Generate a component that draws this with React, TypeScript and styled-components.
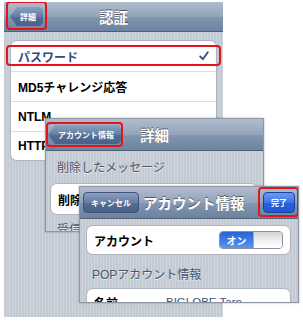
import React from "react";
import styled, { createGlobalStyle, css } from "styled-components";

const Global = createGlobalStyle`
  html, body { margin: 0; padding: 0; background: #fff; }
  #root { width: 303px; height: 322px; }
`;

const FONT = `"Liberation Sans", "Noto Sans CJK JP", sans-serif`;

const Stage = styled.div`
  position: relative;
  width: 303px;
  height: 322px;
  overflow: hidden;
  background: #fff;
  font-family: ${FONT};
`;

const Screen = styled.div<{ $x: number; $y: number; $w: number; $h: number; $framed?: boolean }>`
  position: absolute;
  left: ${(p) => p.$x}px;
  top: ${(p) => p.$y}px;
  width: ${(p) => p.$w}px;
  height: ${(p) => p.$h}px;
  box-sizing: border-box;
  display: flex;
  flex-direction: column;
  overflow: hidden;
  background: repeating-linear-gradient(90deg, #c3cad3 0 2px, #cfd5dc 2px 3px);
  ${(p) =>
    p.$framed &&
    css`
      border: 1px solid #8f97a2;
      box-shadow: 0 0 2px rgba(0, 0, 0, 0.3);
    `}
`;

const NavBar = styled.div<{ $h: number; $pad: number }>`
  flex: none;
  height: ${(p) => p.$h}px;
  box-sizing: border-box;
  padding: 0 ${(p) => p.$pad}px;
  display: grid;
  grid-template-columns: 1fr auto 1fr;
  align-items: center;
  background: linear-gradient(#b1bdcd, #92a3ba 50%, #8397b0 51%, #6c82a0);
  border-bottom: 1px solid #4f5f75;
`;

const Slot = styled.div<{ $end?: boolean }>`
  display: flex;
  justify-content: ${(p) => (p.$end ? "flex-end" : "flex-start")};
`;

const Title = styled.div<{ $shift?: number }>`
  color: #fff;
  font-weight: bold;
  font-size: 14.5px;
  white-space: nowrap;
  margin-left: ${(p) => p.$shift ?? 0}px;
  text-shadow: 0 -1px 0 rgba(0, 0, 0, 0.5);
`;

const Marked = styled.div`
  position: relative;
  display: flex;
`;

const Highlight = styled.div<{ $t: number; $r: number; $b: number; $l: number }>`
  position: absolute;
  top: ${(p) => p.$t}px;
  right: ${(p) => p.$r}px;
  bottom: ${(p) => p.$b}px;
  left: ${(p) => p.$l}px;
  border: 2.5px solid #e3141c;
  border-radius: 4px;
  pointer-events: none;
`;

const BackButton = styled.div`
  height: 19px;
  padding: 0 7px 0 10px;
  display: flex;
  align-items: center;
  color: #fff;
  font-size: 8px;
  font-weight: bold;
  white-space: nowrap;
  background: linear-gradient(#8ba1c0, #637ca2 50%, #546d93 51%, #4a628b);
  clip-path: polygon(7px 0, calc(100% - 3px) 0, 100% 3px, 100% calc(100% - 3px), calc(100% - 3px) 100%, 7px 100%, 0 50%);
`;

const BarButton = styled.div<{ $done?: boolean }>`
  height: 19px;
  padding: 0 7px;
  display: flex;
  align-items: center;
  color: #fff;
  font-size: 8px;
  font-weight: bold;
  white-space: nowrap;
  border-radius: 4px;
  border: 1px solid ${(p) => (p.$done ? "#1c3f9a" : "#3d5278")};
  background: ${(p) =>
    p.$done
      ? "linear-gradient(#6b9af0, #3a74e6 50%, #2861de 51%, #2158d2)"
      : "linear-gradient(#8ba1c0, #637ca2 50%, #546d93 51%, #4a628b)"};
`;

const Group = styled.div<{ $m: string }>`
  margin: ${(p) => p.$m};
  background: #fff;
  border: 1px solid #adb4bd;
  border-radius: 7px;
  display: flex;
  flex-direction: column;
`;

const Row = styled.div<{ $h: number; $sel?: boolean; $first?: boolean; $lift?: number }>`
  position: relative;
  height: ${(p) => p.$h}px;
  box-sizing: border-box;
  padding: 0 7px ${(p) => p.$lift ?? 0}px 7px;
  display: flex;
  align-items: center;
  justify-content: space-between;
  font-size: 12px;
  font-weight: bold;
  white-space: nowrap;
  color: ${(p) => (p.$sel ? "#314d7f" : "#000")};
  border-top: ${(p) => (p.$first ? "none" : "1px solid #dcdcdc")};
`;

const Label = styled.span<{ $w?: number }>`
  width: ${(p) => (p.$w ? `${p.$w}px` : "auto")};
  flex: none;
`;

const Value = styled.span`
  flex: 1;
  font-weight: normal;
  font-size: 11.5px;
  color: #385487;
`;

const SectionHeader = styled.div<{ $pt: number; $pb: number; $pl: number }>`
  padding: ${(p) => p.$pt}px 0 ${(p) => p.$pb}px ${(p) => p.$pl}px;
  font-size: 12px;
  line-height: 14px;
  color: #4a566c;
  white-space: nowrap;
  text-shadow: 0 1px 0 rgba(255, 255, 255, 0.6);
`;

const Switch = styled.div`
  width: 64px;
  height: 18px;
  box-sizing: border-box;
  border: 1px solid #8d9196;
  border-radius: 4px;
  overflow: hidden;
  display: flex;
`;

const SwitchOn = styled.div`
  width: 33px;
  display: flex;
  align-items: center;
  justify-content: center;
  color: #fff;
  font-size: 10px;
  font-weight: bold;
  background: linear-gradient(#2a63d4, #3c7ce8 50%, #5a95f2);
`;

const SwitchKnob = styled.div`
  flex: 1;
  border-left: 1px solid #a4a7ab;
  background: linear-gradient(#d2d2d2, #f4f4f4 60%, #ffffff);
`;

const Check = () => (
  <svg width="10" height="10" viewBox="0 0 10 10">
    <path d="M1.2 5.4 L3.8 8.2 L8.8 1.2" fill="none" stroke="#34507f" strokeWidth="1.9" strokeLinecap="round" strokeLinejoin="round" />
  </svg>
);

export default function App() {
  return (
    <Stage>
      <Global />

      <Screen $x={4} $y={2} $w={219} $h={315}>
        <NavBar $h={30} $pad={6}>
          <Slot>
            <Marked>
              <BackButton>詳細</BackButton>
              <Highlight $t={-6} $r={-4} $b={-4} $l={-4} />
            </Marked>
          </Slot>
          <Title>認証</Title>
          <Slot $end />
        </NavBar>
        <Group $m="8px 6px 0 6px">
          <Row $h={30} $sel $first>
            <Label>パスワード</Label>
            <Check />
            <Highlight $t={4} $r={-5} $b={5} $l={-5} />
          </Row>
          <Row $h={30}>
            <Label>MD5チャレンジ応答</Label>
          </Row>
          <Row $h={30}>
            <Label>NTLM</Label>
          </Row>
          <Row $h={29}>
            <Label>HTTP Digest</Label>
          </Row>
        </Group>
      </Screen>

      <Screen $x={45} $y={118} $w={219} $h={114} $framed>
        <NavBar $h={32} $pad={2}>
          <Slot>
            <Marked>
              <BackButton>アカウント情報</BackButton>
              <Highlight $t={-3} $r={-2} $b={-3} $l={-2} />
            </Marked>
          </Slot>
          <Title>詳細</Title>
          <Slot $end />
        </NavBar>
        <SectionHeader $pt={10} $pb={8} $pl={11}>
          削除したメッセージ
        </SectionHeader>
        <Group $m="0 5px 0 4px">
          <Row $h={30} $first>
            <Label>削除まで</Label>
          </Row>
        </Group>
        <SectionHeader $pt={8} $pb={8} $pl={11}>
          受信メール
        </SectionHeader>
      </Screen>

      <Screen $x={79} $y={186} $w={220} $h={117} $framed>
        <NavBar $h={32} $pad={3}>
          <Slot>
            <BarButton>キャンセル</BarButton>
          </Slot>
          <Title $shift={4}>アカウント情報</Title>
          <Slot $end>
            <Marked>
              <BarButton $done>完了</BarButton>
              <Highlight $t={-5} $r={-4} $b={-4} $l={-5} />
            </Marked>
          </Slot>
        </NavBar>
        <Group $m="6px 7px 0 6px">
          <Row $h={28} $first>
            <Label>アカウント</Label>
            <Switch>
              <SwitchOn>オン</SwitchOn>
              <SwitchKnob />
            </Switch>
          </Row>
        </Group>
        <SectionHeader $pt={13} $pb={6} $pl={12}>
          POPアカウント情報
        </SectionHeader>
        <Group $m="0 7px 0 6px">
          <Row $h={30} $first $lift={4}>
            <Label $w={72}>名前</Label>
            <Value>BIGLOBE Taro</Value>
          </Row>
        </Group>
      </Screen>
    </Stage>
  );
}
